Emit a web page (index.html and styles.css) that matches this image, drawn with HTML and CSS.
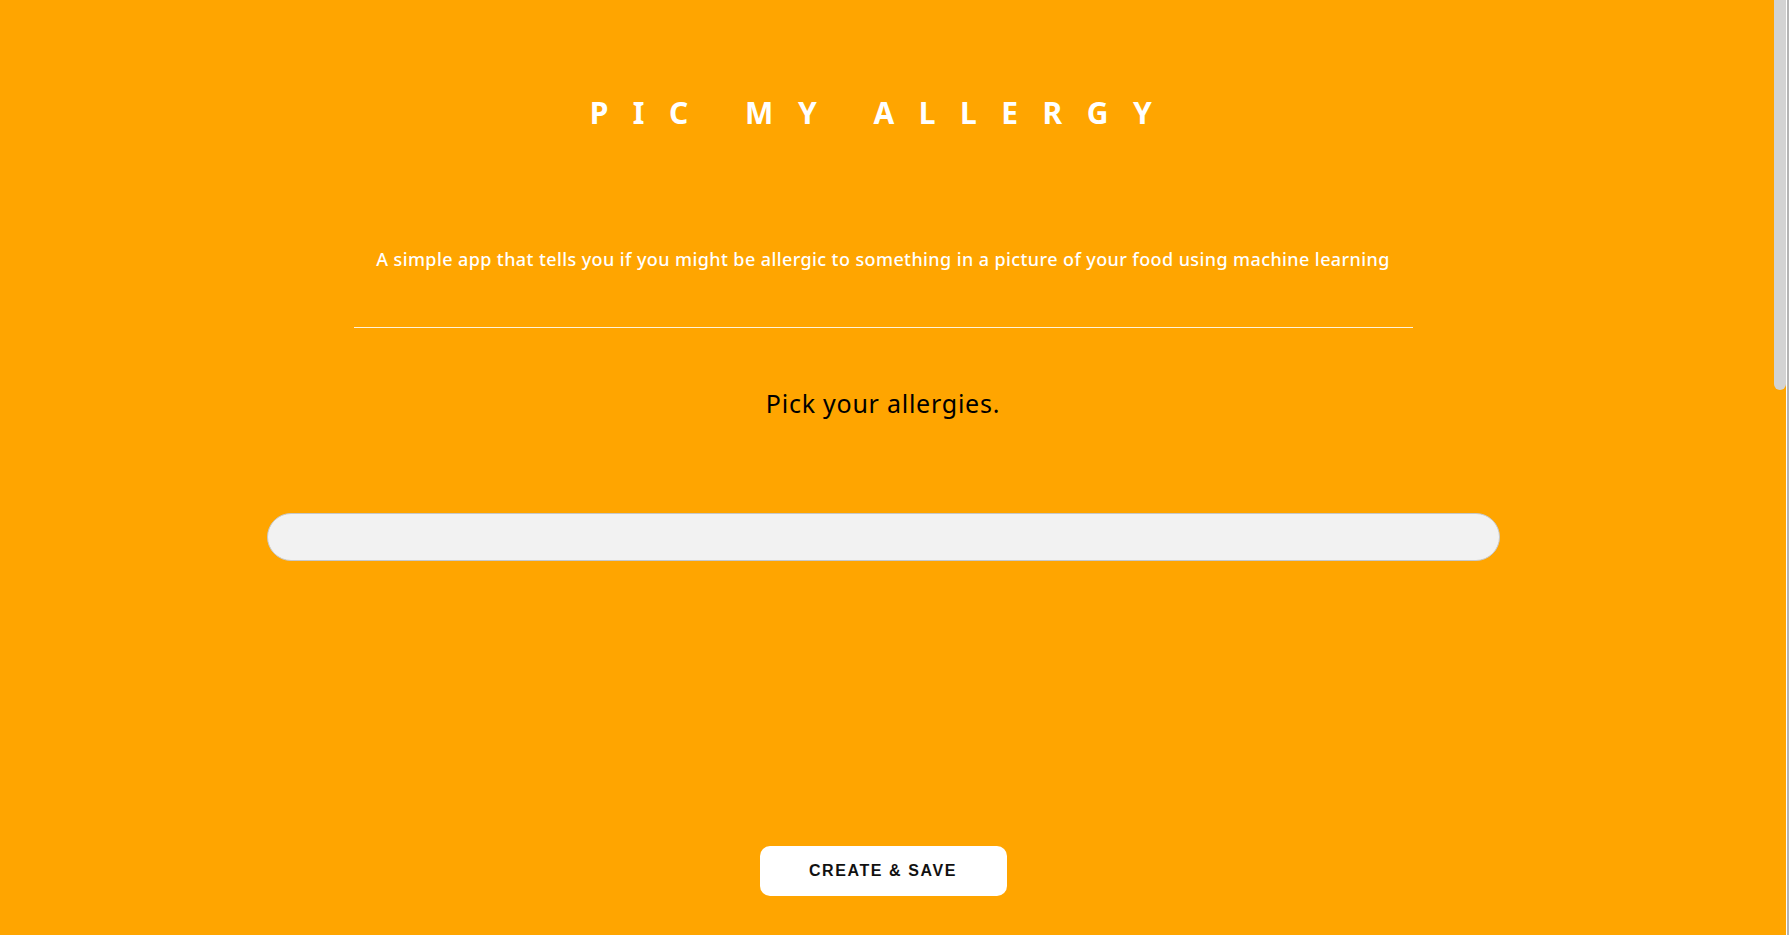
FILE: index.html
```html
<!DOCTYPE html>
<html lang="en">
<head>
<meta charset="utf-8">
<title>Pic My Allergy</title>
<link rel="stylesheet" href="styles.css">
</head>
<body>
<main class="page">
  <h1 class="title">PIC MY ALLERGY</h1>
  <p class="tagline">A simple app that tells you if you might be allergic to something in a picture of your food using machine learning</p>
  <div class="rule"></div>
  <h2 class="prompt">Pick your allergies.</h2>
  <input class="search" type="text" aria-label="Allergies">
  <button class="save" type="button">CREATE &amp; SAVE</button>
</main>
<div class="scrollbar" aria-hidden="true"><div class="scrollbar-thumb"></div></div>
</body>
</html>
```

FILE: styles.css
```css
html {
  background: #ffa500;
}

body {
  margin: 0;
  background: #ffa500;
  font-family: "Noto Sans", "Open Sans", sans-serif;
}

.page {
  width: 1766px;
  display: flex;
  flex-direction: column;
  align-items: center;
  padding-top: 93px;
  padding-bottom: 1344px;
}

.title {
  margin: 0;
  height: 40px;
  line-height: 40px;
  font-size: 30px;
  font-weight: 700;
  color: #ffffff;
  letter-spacing: 24.5px;
  white-space: nowrap;
}

.tagline {
  margin: 114px 0 0;
  line-height: 24px;
  font-size: 18px;
  font-weight: 500;
  letter-spacing: 0.4px;
  color: #ffffff;
  white-space: nowrap;
}

.rule {
  margin-top: 56px;
  width: 1059px;
  height: 1px;
  background: rgba(255, 255, 255, 0.85);
}

.prompt {
  margin: 59px 0 0;
  line-height: 33px;
  font-size: 25px;
  font-weight: 400;
  letter-spacing: 0.75px;
  color: #000000;
}

.search {
  margin-top: 93px;
  box-sizing: border-box;
  width: 1233px;
  height: 48px;
  border: 1px solid #c8c8c8;
  border-radius: 24px;
  background: #f2f2f2;
  outline: none;
  padding: 0 20px;
  font-family: inherit;
  font-size: 16px;
}

.save {
  margin-top: 285px;
  width: 247px;
  height: 50px;
  border: none;
  border-radius: 10px;
  background: #ffffff;
  font-family: "Liberation Sans", Arial, sans-serif;
  font-size: 16px;
  font-weight: 700;
  letter-spacing: 1.6px;
  color: #111111;
  cursor: pointer;
}

.scrollbar {
  position: fixed;
  top: 0;
  right: 0;
  width: 15px;
  height: 100%;
  background: linear-gradient(to right, transparent 12px, #ffffff 12px, #ffffff 13px, #b4b4b4 13px);
}

.scrollbar-thumb {
  width: 12px;
  height: 390px;
  background: #d3d3d3;
  border-radius: 0 0 6px 6px;
}
```
